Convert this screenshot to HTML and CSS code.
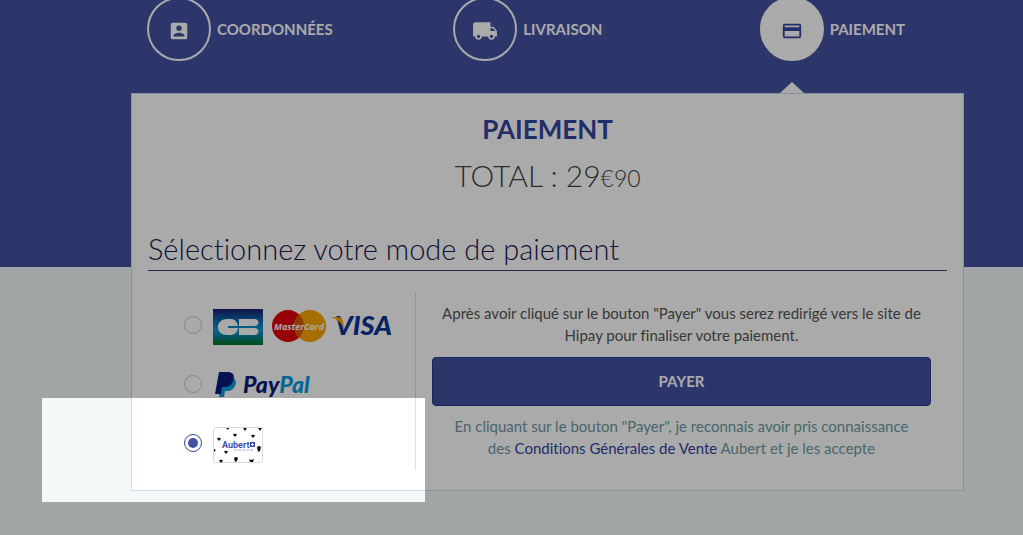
FILE: index.html
```html
<!DOCTYPE html>
<html lang="fr">
<head>
  <meta charset="UTF-8">
  <meta name="viewport" content="width=device-width, initial-scale=1">
  <title>Paiement</title>
  <link rel="stylesheet" href="styles.css">
</head>
<body>
  <div class="page">
    <ol class="steps">
      <li class="step">
        <span class="step-circle">
          <svg class="step-icon" viewBox="0 0 24 24"><path d="M3 5v14a2 2 0 0 0 2 2h14a2 2 0 0 0 2-2V5a2 2 0 0 0-2-2H5a2 2 0 0 0-2 2zm12 4a3 3 0 1 1-6 0 3 3 0 0 1 6 0zm-9 8c0-2 4-3.100 6-3.100s6 1.100 6 3.100v1H6v-1z"/></svg>
        </span>
        <span>COORDONNÉES</span>
      </li>
      <li class="step">
        <span class="step-circle">
          <svg class="step-icon step-icon-truck" viewBox="0 0 24 24"><path d="M20 8h-3V4H3a2 2 0 0 0-2 2v11h2a3 3 0 0 0 6 0h6a3 3 0 0 0 6 0h2v-5l-3-4zM6 18.500a1.500 1.500 0 1 1 0-3 1.500 1.500 0 0 1 0 3zm13.500-9l1.960 2.500H17V9.500h2.500zM18 18.500a1.500 1.500 0 1 1 0-3 1.500 1.500 0 0 1 0 3z"/></svg>
        </span>
        <span>LIVRAISON</span>
      </li>
      <li class="step step-active">
        <span class="step-circle">
          <svg class="step-icon" viewBox="0 0 24 24"><path d="M20 4H4a2 2 0 0 0-2 2v12a2 2 0 0 0 2 2h16a2 2 0 0 0 2-2V6a2 2 0 0 0-2-2zm0 14H4v-6h16v6zm0-10H4V6h16v2z"/></svg>
        </span>
        <span>PAIEMENT</span>
      </li>
    </ol>

    <main class="card">
      <h1 class="card-title">PAIEMENT</h1>
      <p class="total">TOTAL : 29<span class="cents">€90</span></p>
      <h2 class="section-title">Sélectionnez votre mode de paiement</h2>

      <form class="payment">
        <div class="methods">
          <label class="method">
            <input class="radio" type="radio" name="mode" value="cb" aria-label="Carte bancaire">
            <svg class="logo logo-cards" viewBox="0 0 180 36">
              <defs>
                <linearGradient id="cb" x1="0" y1="0" x2="0" y2="1">
                  <stop offset="0" stop-color="#1e1c6c"/>
                  <stop offset="0.350" stop-color="#0872b8"/>
                  <stop offset="0.600" stop-color="#1598d0"/>
                  <stop offset="0.780" stop-color="#087d91"/>
                  <stop offset="1" stop-color="#0a761c"/>
                </linearGradient>
              </defs>
              <rect width="50" height="36" fill="url(#cb)"/>
              <path fill="#fff" d="M14 10h4c4 0 6 3 7 7H15v2h10c-1 5-4 7-8 7h-3c-5 0-9-3-9-8s4-8 9-8zM26 10h15c6 0 6 7 0 7H26zM26 19h15c6 0 6 7 0 7H26z"/>
              <circle cx="75" cy="17" r="16" fill="#e00008"/>
              <circle cx="97" cy="17" r="16" fill="#f7a500"/>
              <path fill="#d55a05" d="M86 5.400a16 16 0 0 1 0 23.200a16 16 0 0 1 0-23.200z"/>
              <text class="mastercard" x="86" y="21" text-anchor="middle">MasterCard</text>
              <text class="visa" x="122" y="26">VISA</text>
              <path fill="#f6a300" d="M118 8h7q4 0 5 4l1 7q-4-8-13-11z"/>
            </svg>
          </label>
          <label class="method">
            <input class="radio" type="radio" name="mode" value="paypal" aria-label="PayPal">
            <svg class="logo logo-paypal" viewBox="0 0 100 28">
              <path fill="#0a9bdb" d="M9 6h12q3 3 1 8-2 5-8 5h-2l-1 6H6z"/>
              <path fill="#071b7b" d="M6 0h10q7 1 4 9-2 6-9 6H9l-1 7H2z"/>
              <text class="paypal" x="30" y="21">Pay<tspan fill="#0a9bdb">Pal</tspan></text>
            </svg>
          </label>
          <label class="method">
            <input class="radio" type="radio" name="mode" value="aubert" aria-label="Carte Aubert" checked>
            <svg class="logo logo-aubert" viewBox="0 0 50 36">
              <rect x="0.500" y="0.500" width="49" height="35" rx="2" fill="#fff" stroke="#dcdcdc"/>
              <defs><path id="heart" d="M0 2L-1.700 0Q-2-2 0-1Q2-2 1.700 0z"/></defs>
              <g fill="#111">
                <path d="M13 1h3l-1 2zM30 1h4l-2 3zM45 1h4l-2 3zM1 22l2 1-2 2z"/>
                <use href="#heart" x="6" y="12"/>
                <use href="#heart" x="22" y="8"/>
                <use href="#heart" x="40" y="9"/>
                <use href="#heart" x="13" y="25"/>
                <use href="#heart" x="8" y="34"/>
                <path d="M44 20q2-2 4 0l-1 4-2 1zM21 31q2-2 4 0l-1 3-2 1zM36 32l2 1 3-1-1 3h-3z"/>
              </g>
              <text class="aubert" x="9" y="21">Aubert</text>
              <path fill="#3547a5" d="M37 15h5v5h-5z"/>
              <path stroke="#fff" d="M39.500 16v3M38 17.500h3"/>
              <path stroke="#a5aee0" stroke-dasharray="3 1" d="M21 23h20"/>
            </svg>
          </label>
        </div>

        <div class="confirm">
          <p class="info">Après avoir cliqué sur le bouton "Payer" vous serez redirigé vers le site de Hipay pour finaliser votre paiement.</p>
          <button class="pay-button" type="button">PAYER</button>
          <p class="terms">En cliquant sur le bouton "Payer", je reconnais avoir pris connaissance des <a href="#">Conditions Générales de Vente</a> Aubert et je les accepte</p>
        </div>
      </form>
    </main>
  </div>

  <!-- zone mise en avant, le reste est assombri -->
  <div class="spotlight"></div>
</body>
</html>
```
FILE: styles.css
```css
* {
  box-sizing: border-box;
}

body {
  margin: 0;
  min-height: 100vh;
  overflow: hidden;
  background: linear-gradient(#4451a1 267px, #f4f8f9 267px);
  color: #555;
  font-family: Lato, "Open Sans", sans-serif;
  font-size: 15px;
  font-weight: 400;
  font-variant-ligatures: no-common-ligatures;
  line-height: 22px;
}

h1, h2, p {
  margin: 0;
}

.page {
  margin-top: -3px;
  padding: 0 59px 0 131px;
}

/* étapes */
.steps {
  display: grid;
  grid-template-columns: 1fr 1fr auto;
  margin: 0;
  padding: 0 59px 0 16px;
  list-style: none;
}

.step {
  display: flex;
  align-items: center;
  gap: 6px;
  color: #fff;
  font-weight: 700;
}

.step-circle {
  position: relative;
  display: flex;
  align-items: center;
  justify-content: center;
  width: 64px;
  height: 64px;
  padding-top: 4px;
  border: 2px solid #fff;
  border-radius: 50%;
}

.step-icon {
  width: 22px;
  height: 22px;
  fill: #fff;
}

.step-icon-truck {
  width: 26px;
  height: 26px;
}

.step-active .step-circle {
  background: #fff;
}

.step-active .step-icon {
  fill: #3445a0;
}

.step-active .step-circle::after {
  content: "";
  position: absolute;
  top: 83px;
  left: 18px;
  border: 12px solid transparent;
  border-top: 0;
  border-bottom: 11px solid #fff;
}

/* carte */
.card {
  margin-top: 32px;
  padding: 19px 16px 20px;
  background: #fff;
  border: 1px solid #c9dde3;
}

.card-title {
  color: #3445a0;
  font-size: 26px;
  font-weight: 700;
  line-height: 32px;
  text-align: center;
}

.total {
  margin-top: 10px;
  color: #444;
  font-size: 30px;
  font-weight: 300;
  line-height: 40px;
  text-align: center;
}

.cents {
  font-size: 23px;
}

.section-title {
  margin-top: 31px;
  padding-bottom: 1px;
  border-bottom: 1px solid #33417e;
  color: #17194f;
  font-size: 29px;
  font-weight: 300;
  line-height: 40px;
}

.payment {
  display: flex;
  gap: 16px;
  margin-top: 21px;
}

.methods {
  flex: 0 0 268px;
  height: 178px;
  padding-left: 36px;
  border-right: 1px solid #d5e2e8;
}

.method {
  display: flex;
  align-items: center;
  gap: 11px;
  height: 59px;
  padding-top: 7px;
}

.radio {
  appearance: none;
  display: grid;
  place-items: center;
  flex: none;
  width: 18px;
  height: 18px;
  margin: 0;
  border: 1px solid #c8c8c8;
  border-radius: 50%;
}

.radio:checked {
  border-color: #3445a0;
}

.radio:checked::before {
  content: "";
  width: 10px;
  height: 10px;
  border-radius: 50%;
  background: #4451a1;
}

.logo {
  flex: none;
  margin-top: 4px;
  overflow: visible;
}

.logo-cards {
  width: 180px;
  height: 36px;
}

.logo-paypal {
  width: 100px;
  height: 28px;
}

.logo-aubert {
  width: 50px;
  height: 36px;
}

.mastercard {
  fill: #fff;
  font: italic 700 9px "Open Sans", sans-serif;
}

.visa {
  fill: #0b3595;
  font: italic 900 27px Lato, sans-serif;
}

.paypal {
  fill: #071b7b;
  font: italic 900 23px Lato, sans-serif;
}

.aubert {
  fill: #3d50b5;
  font: 700 9px Roboto, sans-serif;
}

.confirm {
  flex: 1;
  padding: 10px 16px 0 0;
  text-align: center;
}

.pay-button {
  display: block;
  width: 100%;
  height: 49px;
  margin: 11px 0 9px;
  padding: 0 0 2px;
  border: 1px solid #26398f;
  border-radius: 4px;
  background: #4451a1;
  color: #fff;
  font: inherit;
  font-weight: 700;
}

.terms {
  padding: 0 16px;
  color: #6f9aa2;
}

.terms a {
  color: #3445a0;
  text-decoration: none;
}

.spotlight {
  position: absolute;
  top: 398px;
  left: 42px;
  width: 383px;
  height: 104px;
  box-shadow: 0 0 0 2000px rgba(0, 0, 0, 0.333);
  pointer-events: none;
}
```
